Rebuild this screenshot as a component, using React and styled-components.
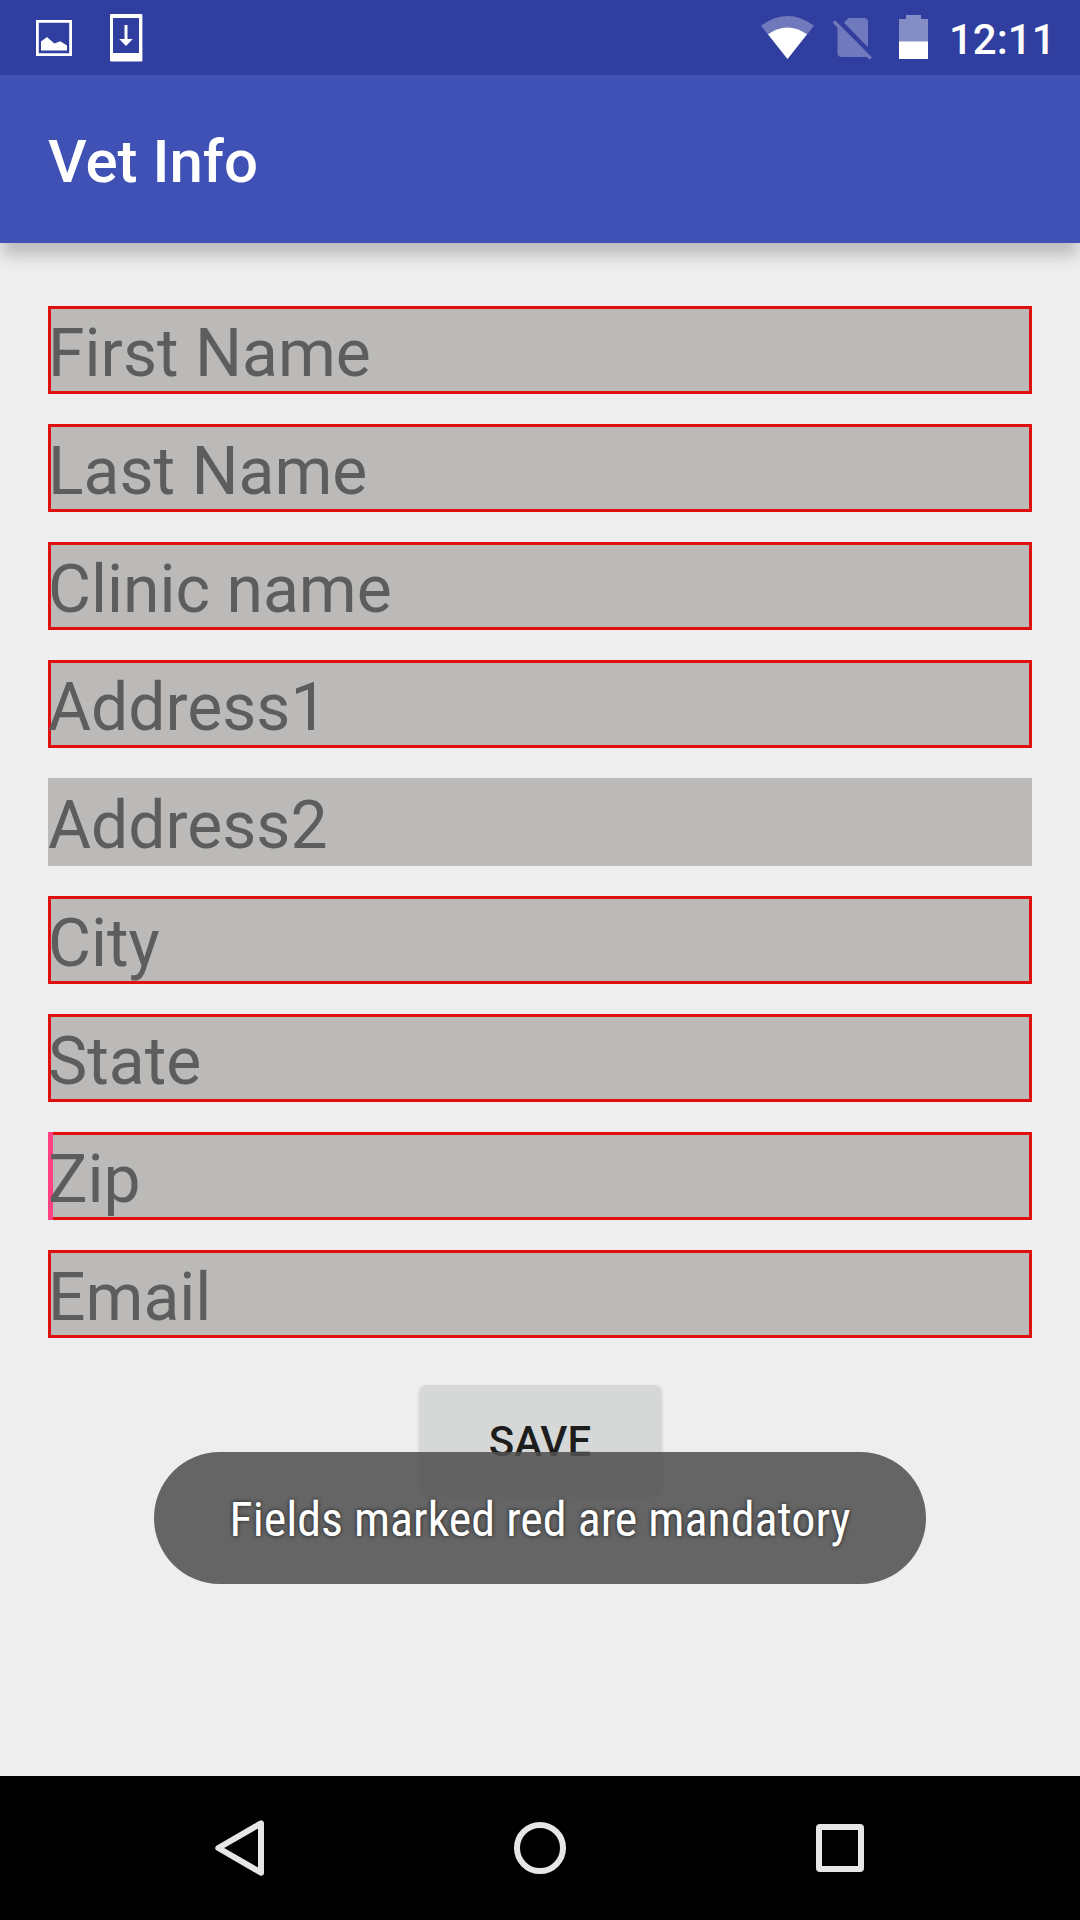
import React from "react";
import styled, { createGlobalStyle } from "styled-components";

const GlobalStyle = createGlobalStyle`
  * { box-sizing: border-box; }
  body { margin: 0; background: #eeeeee; font-family: Roboto, "Noto Sans", sans-serif; }
`;

const Screen = styled.div`
  position: relative;
  display: flex;
  flex-direction: column;
  width: 1080px;
  height: 1920px;
  overflow: hidden;
  background: #eeeeee;
`;

const StatusBar = styled.header`
  flex: none;
  display: flex;
  justify-content: space-between;
  height: 75px;
  background: #303f9f;
`;

const StatusGroup = styled.div`
  display: flex;
  align-items: flex-start;
`;

const StatusIcon = styled.svg`
  display: block;
  flex: none;
`;

const Clock = styled.time`
  width: 132px;
  padding: 0 0 0 1px;
  color: #ffffff;
  font-size: 42px;
  font-weight: 500;
  line-height: 79px;
  white-space: nowrap;
`;

const AppBar = styled.div`
  flex: none;
  z-index: 1;
  height: 168px;
  padding-left: 48px;
  background: #3f51b5;
  box-shadow: 0 14px 15px -2px rgba(0, 0, 0, 0.21);
  clip-path: inset(0 0 -40px 0);
`;

const Title = styled.h1`
  margin: 0;
  color: #ffffff;
  font-size: 60px;
  font-weight: 500;
  line-height: 174px;
`;

const Form = styled.main`
  flex: 1;
  display: flex;
  flex-direction: column;
  align-items: center;
  padding: 63px 48px 0;
`;

const Fields = styled.div`
  display: grid;
  gap: 30px;
  width: 100%;
`;

const Field = styled.div`
  position: relative;
  height: 88px;
  border: 3px solid ${(p) => (p.$required ? "#e01010" : "#bbbab8")};
  background: #bbbab8;
`;

const Hint = styled.span`
  position: relative;
  display: block;
  margin-left: -3px;
  color: #5e5d5d;
  font-size: 66px;
  line-height: 89px;
  white-space: nowrap;
`;

const Caret = styled.span`
  position: absolute;
  left: -3px;
  top: -3px;
  width: 5px;
  height: 88px;
  background: #ff4081;
`;

const SaveButton = styled.button`
  width: 241px;
  height: 109px;
  margin-top: 47px;
  padding: 1px 0 0;
  border: 0;
  border-radius: 6px;
  background: #d6d8d7;
  box-shadow: 0 2px 4px rgba(0, 0, 0, 0.2);
  color: #1d1d1d;
  font: 500 42px/112px Roboto, "Noto Sans", sans-serif;
`;

const Toast = styled.div`
  position: absolute;
  z-index: 2;
  left: 154px;
  top: 1452px;
  display: flex;
  justify-content: center;
  width: 772px;
  height: 132px;
  border-radius: 66px;
  background: rgba(80, 80, 80, 0.87);
`;

const ToastText = styled.span`
  color: #ffffff;
  font-family: "Roboto Condensed", Roboto, sans-serif;
  font-stretch: condensed;
  font-size: 48px;
  line-height: 136px;
  white-space: nowrap;
  text-shadow: 0 0 4px rgba(0, 0, 0, 0.73);
`;

const NavBar = styled.nav`
  flex: none;
  display: flex;
  justify-content: center;
  gap: 156px;
  height: 144px;
  background: #000000;
`;

const NavIcon = styled.svg`
  display: block;
  width: 144px;
  height: 144px;
  fill: none;
  stroke: #e6e6e6;
  stroke-width: 6;
  stroke-linejoin: round;
`;

const fields = [
  { label: "First Name", required: true },
  { label: "Last Name", required: true },
  { label: "Clinic name", required: true },
  { label: "Address1", required: true },
  { label: "Address2", required: false },
  { label: "City", required: true },
  { label: "State", required: true },
  { label: "Zip", required: true, focused: true },
  { label: "Email", required: true },
];

export default function App() {
  return (
    <>
      <GlobalStyle />
      <Screen>
        <StatusBar>
          <StatusGroup>
            <StatusIcon width="150" height="75" viewBox="0 0 150 75" fill="#fff">
              <path fillRule="evenodd" d="M36 20h36v36H36zM38.8 22.8v30.4h30.4V22.8z" />
              <path d="M41 50.5v-9l6-4.500 7.300 6.500 6-2.300 6.700 4.300v5z" />
              <path fillRule="evenodd" d="M111.2 14h30q1.2 0 1.2 1.2v45q0 1.2-1.2 1.2h-30q-1.2 0-1.2-1.2v-45q0-1.2 1.2-1.2zM113 18v35h26V18z" />
              <path d="M124.5 25h3v14h5.3l-6.8 7-6.8-7h5.3z" />
            </StatusIcon>
          </StatusGroup>
          <StatusGroup>
            <StatusIcon width="198" height="75" viewBox="750 0 198 75">
              <path d="M761 25.7Q787.500 6.500 814 25.700L787.500 59z" fill="#7079bc" />
              <path d="M768 34.300Q787.500 20.700 807 34.300L787.500 59z" fill="#fff" />
              <path d="M844 22.800l4.500-4.800H864q4 0 4 4v25.300zM837.500 25.500L868.200 57H842q-4.500 0-4.500-4z" fill="#7079bc" />
              <path d="M833.800 21.500L870.700 58.600" stroke="#7079bc" strokeWidth="3.500" />
              <path d="M899 41.300V19h7v-4h15v4h7v22.300z" fill="#858dc6" />
              <path d="M899 41.300h29V59h-29z" fill="#fff" />
            </StatusIcon>
            <Clock>12:11</Clock>
          </StatusGroup>
        </StatusBar>

        <AppBar>
          <Title>Vet Info</Title>
        </AppBar>

        <Form>
          <Fields>
            {fields.map((field) => (
              <Field key={field.label} $required={field.required}>
                {field.focused && <Caret />}
                <Hint>{field.label}</Hint>
              </Field>
            ))}
          </Fields>
          <SaveButton type="button">SAVE</SaveButton>
        </Form>

        <NavBar>
          <NavIcon viewBox="0 0 144 144">
            <path d="M50.300 72L93 47.300V96.700z" />
          </NavIcon>
          <NavIcon viewBox="0 0 144 144">
            <circle cx="72" cy="72" r="23" />
          </NavIcon>
          <NavIcon viewBox="0 0 144 144">
            <rect x="51" y="51" width="42" height="42" rx="1" />
          </NavIcon>
        </NavBar>

        <Toast role="status">
          <ToastText>Fields marked red are mandatory</ToastText>
        </Toast>
      </Screen>
    </>
  );
}
